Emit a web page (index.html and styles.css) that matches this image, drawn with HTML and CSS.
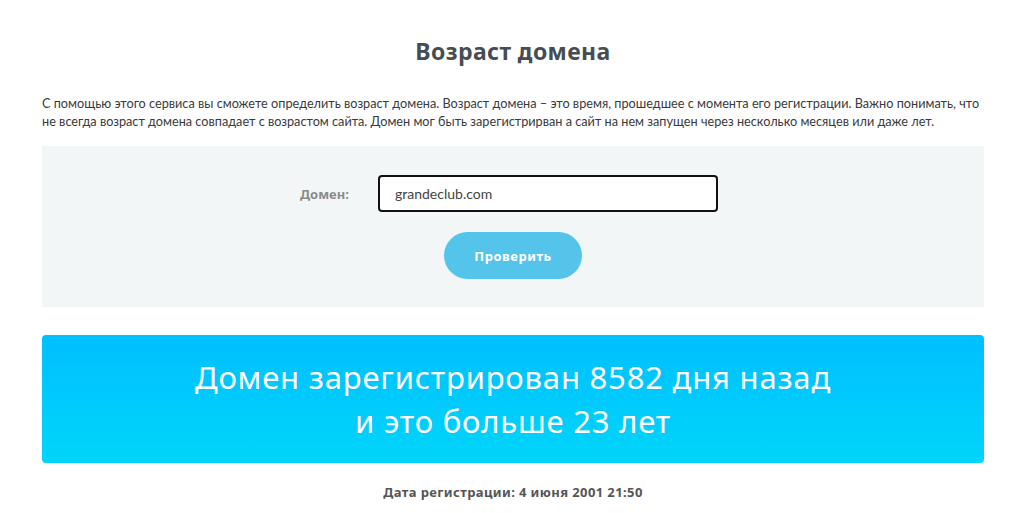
FILE: index.html
```html
<!DOCTYPE html>
<html lang="ru">
<head>
  <meta charset="UTF-8" />
  <meta name="viewport" content="width=device-width, initial-scale=1.0"/>
  <title>Возраст домена</title>
  <link rel="stylesheet" href="styles.css">
</head>
<body>
  <div class="container">
    <h1>Возраст домена</h1>

    <p class="intro">С помощью этого сервиса вы сможете определить возраст домена. Возраст домена – это время, прошедшее с момента его регистрации. Важно понимать, что не всегда возраст домена совпадает с возрастом сайта. Домен мог быть зарегистрирван а сайт на нем запущен через несколько месяцев или даже лет.</p>

    <form class="check-box">
      <div class="field">
        <label for="domain">Домен:</label>
        <input type="text" id="domain" value="grandeclub.com"/>
      </div>
      <button type="button">Проверить</button>
    </form>

    <div class="result">
      Домен зарегистрирован 8582 дня назад<br>
      и это больше 23 лет
    </div>

    <p class="reg-date">Дата регистрации: 4 июня 2001 21:50</p>
  </div>
</body>
</html>
```

FILE: styles.css
```css
* {
  box-sizing: border-box;
  margin: 0;
  padding: 0;
}

body {
  background: #ffffff;
  font-family: 'Noto Sans', 'Open Sans', sans-serif;
  color: #333;
}

.container {
  width: 942px;
  margin-left: 42px;
  padding-top: 36px;
}

h1 {
  text-align: center;
  font-size: 23px;
  font-weight: 700;
  letter-spacing: 0.4px;
  color: #474c53;
  line-height: 30px;
  margin-bottom: 28px;
}

.intro {
  font-family: 'Lato', sans-serif;
  font-size: 12.7px;
  line-height: 18px;
  color: #3a3a3a;
  margin-bottom: 16px;
}

.check-box {
  background: #f3f6f7;
  height: 161px;
  padding-top: 29px;
  display: flex;
  flex-direction: column;
  align-items: center;
}

.field {
  display: flex;
  align-items: center;
  margin-left: -8px;
}

.field label {
  font-size: 13px;
  font-weight: 700;
  color: #8a8a8a;
  width: 78px;
}

.field input {
  width: 340px;
  height: 37px;
  border: 2px solid #111;
  border-radius: 4px;
  padding: 0 15px;
  font-family: 'Lato', sans-serif;
  font-size: 14px;
  color: #444;
  outline: none;
  background: #fff;
}

button {
  margin-top: 20px;
  width: 138px;
  height: 47px;
  border: none;
  border-radius: 24px;
  background: #55c4eb;
  color: #fff;
  font-family: 'Noto Sans', sans-serif;
  font-size: 13px;
  font-weight: 700;
  letter-spacing: 0.5px;
}

.result {
  margin-top: 28px;
  height: 128px;
  border-radius: 4px;
  background: linear-gradient(to bottom, #00bfff, #00d5fb);
  color: #fff;
  text-align: center;
  font-size: 31px;
  letter-spacing: 0.8px;
  line-height: 44px;
  padding-top: 20px;
}

.reg-date {
  text-align: center;
  font-size: 13px;
  font-weight: 700;
  letter-spacing: 0.4px;
  color: #555;
  margin-top: 20px;
}
```
